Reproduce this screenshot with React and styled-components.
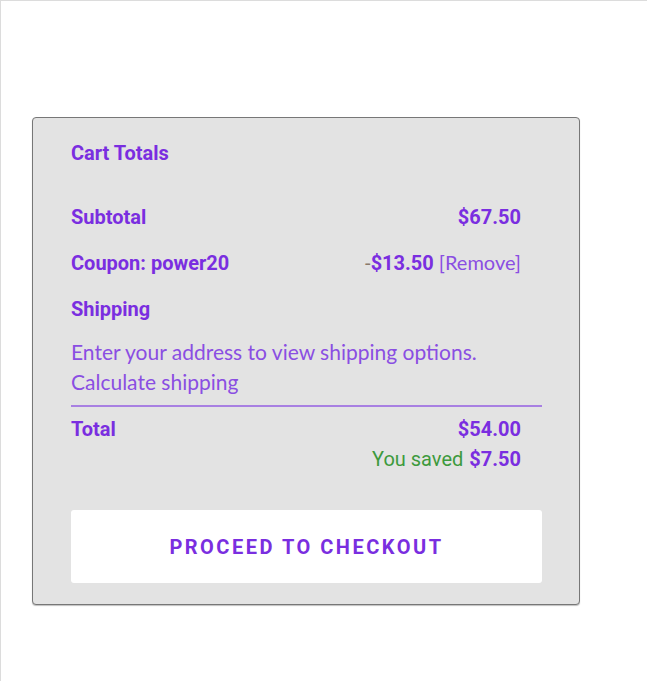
import styled, { createGlobalStyle } from "styled-components";

const Global = createGlobalStyle`
  html, body {
    margin: 0;
    padding: 0;
    background: #fff;
  }
  * {
    box-sizing: border-box;
  }
`;

const purple = "#7a2ee0";
const softPurple = "#8a4ee2";

const Page = styled.div`
  min-height: 100vh;
  border-top: 1px solid #dcdcdc;
  border-left: 1px solid #dcdcdc;
  padding: 116px 0 0 31px;
  font-family: Roboto, "Liberation Sans", sans-serif;
`;

const Card = styled.section`
  width: 548px;
  height: 488px;
  background: #e3e3e3;
  border: 1px solid #777;
  border-radius: 4px;
  box-shadow: 0 1px 1px rgba(0, 0, 0, 0.25);
  padding: 20px 37px 0 38px;
`;

const Title = styled.h2`
  margin: 0;
  font-size: 20px;
  font-weight: 700;
  color: ${purple};
  line-height: 30px;
`;

const Rows = styled.div`
  margin-top: 26px;
  display: flex;
  flex-direction: column;
`;

const Row = styled.div`
  display: flex;
  justify-content: ${(p) => (p.$end ? "flex-end" : "space-between")};
  align-items: center;
  padding-right: 21px;
  height: ${(p) => p.$h || 46}px;
  margin-top: ${(p) => p.$top || 0}px;
  line-height: 24px;
`;

const Label = styled.span`
  font-size: 20px;
  font-weight: 700;
  color: ${purple};
`;

const Amount = styled.span`
  font-size: 20px;
  font-weight: 700;
  color: ${purple};
`;

const Minus = styled.span`
  font-size: 20px;
  font-weight: 400;
  color: #8a7a6a;
`;

const Remove = styled.span`
  font-family: Lato, "Open Sans", sans-serif;
  font-weight: 400;
  font-size: 20px;
  color: ${softPurple};
  margin-left: 5px;
`;

const Note = styled.p`
  margin: 5px 0 0;
  font-family: Lato, "Open Sans", sans-serif;
  font-size: 21px;
  line-height: 30px;
  color: ${softPurple};
  padding-bottom: 8px;
  border-bottom: 2px solid #a880e2;
`;

const Saved = styled.span`
  font-size: 20px;
  color: #3d9a3d;
  margin-right: 6px;
`;

const Button = styled.button`
  display: block;
  width: 100%;
  height: 73px;
  margin-top: 36px;
  border: none;
  border-radius: 3px;
  background: #fff;
  color: ${purple};
  font-family: Roboto, "Liberation Sans", sans-serif;
  font-size: 20px;
  font-weight: 700;
  letter-spacing: 2.5px;
  text-transform: uppercase;
  cursor: pointer;
`;

export default function App() {
  return (
    <>
      <Global />
      <Page>
        <Card>
          <Title>Cart Totals</Title>
          <Rows>
            <Row>
              <Label>Subtotal</Label>
              <Amount>$67.50</Amount>
            </Row>
            <Row>
              <Label>Coupon: power20</Label>
              <span>
                <Minus>-</Minus>
                <Amount>$13.50</Amount>
                <Remove>[Remove]</Remove>
              </span>
            </Row>
            <Row>
              <Label>Shipping</Label>
            </Row>
            <Note>
              Enter your address to view shipping options.
              <br />
              Calculate shipping
            </Note>
            <Row $h={30} $top={7}>
              <Label>Total</Label>
              <Amount>$54.00</Amount>
            </Row>
            <Row $h={30} $end>
              <Saved>You saved</Saved>
              <Amount>$7.50</Amount>
            </Row>
          </Rows>
          <Button>Proceed to checkout</Button>
        </Card>
      </Page>
    </>
  );
}
